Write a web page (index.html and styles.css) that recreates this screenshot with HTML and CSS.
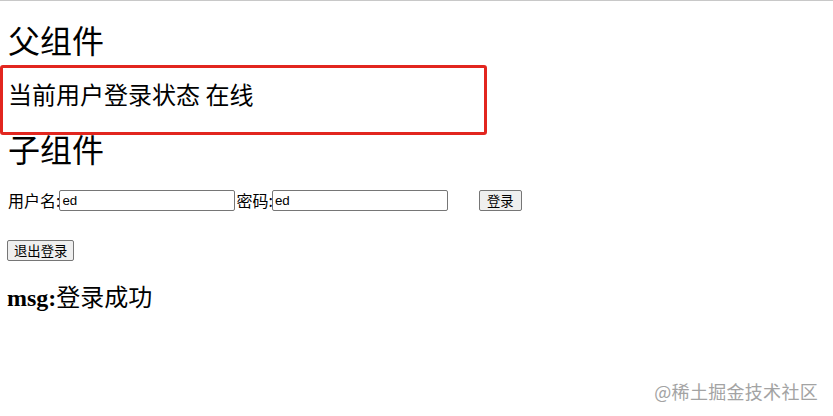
FILE: index.html
```html
<!DOCTYPE html>
<html lang="zh-CN">
<head>
  <meta charset="UTF-8">
  <meta name="viewport" content="width=device-width, initial-scale=1.0">
  <title>父子组件</title>
  <link rel="stylesheet" href="styles.css">
</head>
<body>
  <div id="app">
    <h1 class="title">父组件</h1>
    <div class="status-box">
      <h2 class="status">当前用户登录状态 在线</h2>
    </div>

    <h1 class="title child">子组件</h1>
    <div class="login-row">
      <label for="username">用户名:</label>
      <input type="text" id="username" value="ed">
      <label for="password">密码:</label>
      <input type="text" id="password" value="ed">
      <button class="btn login-btn">登录</button>
    </div>
    <div class="logout-row">
      <button class="btn">退出登录</button>
    </div>
    <h2 class="msg"><b>msg:</b>登录成功</h2>
  </div>

  <div class="watermark">@稀土掘金技术社区</div>
</body>
</html>
```

FILE: styles.css
```css
body {
  margin: 0;
  padding: 0 8px;
  border-top: 1px solid #c8c8c8;
  background-color: #fff;
  color: #000;
  font-family: "Noto Sans CJK SC", "Liberation Serif", serif;
  position: relative;
  height: 415px;
  box-sizing: border-box;
}

.title {
  font-size: 32px;
  font-weight: normal;
  line-height: 26px;
  margin: 25px 0 13px;
}

.title.child {
  margin: 0;
}

.status-box {
  margin-left: -8px;
  width: 476px;
  border: 3px solid #e2261f;
  border-radius: 3px;
  padding: 11px 0 23px 5px;
}

.status {
  font-size: 24px;
  font-weight: normal;
  line-height: 30px;
  margin: 0;
}

.login-row {
  display: flex;
  align-items: center;
  height: 22px;
  margin-top: 28px;
  font-size: 16px;
}

.login-row label {
  margin-right: -1px;
}

.login-row input {
  width: 176px;
  height: 21px;
  box-sizing: border-box;
  border: 1px solid #767676;
  border-radius: 2px;
  padding: 1px 2px;
  font-family: "Liberation Sans", Arial, sans-serif;
  font-size: 13.33px;
  margin: 0 1px 0 0;
}

.btn {
  font-family: "Noto Sans CJK SC", sans-serif;
  font-size: 13.33px;
  line-height: 17px;
  height: 21px;
  padding: 1px 7px;
  background-color: #efefef;
  border: 1px solid #767676;
  border-radius: 2px;
  color: #000;
}

.login-btn {
  margin-left: 30px;
}

.logout-row {
  margin-top: 26px;
  margin-left: -1px;
}

.logout-row .btn {
  padding: 1px 6px;
}

.msg {
  font-size: 24px;
  font-weight: normal;
  line-height: 30px;
  margin: 20px 0 0 -1px;
}

.msg b {
  font-family: "Liberation Serif", serif;
  font-weight: bold;
}

.watermark {
  position: absolute;
  right: 15px;
  top: 378px;
  font-size: 18px;
  line-height: 24px;
  color: #a3a3a3;
  letter-spacing: 0.3px;
}
```
